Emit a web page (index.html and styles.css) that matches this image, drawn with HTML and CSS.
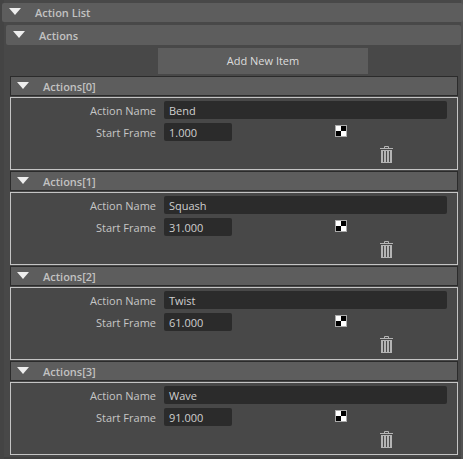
FILE: index.html
```html
<!DOCTYPE html>
<html>
<head>
<meta charset="utf-8">
<title>Action List</title>
<link rel="stylesheet" href="styles.css">
</head>
<body>

<div class="sectionhead toplevel"><span class="arrow"></span><span class="sectiontitle">Action List</span></div>
<div class="sectionhead secondlevel"><span class="arrow"></span><span class="sectiontitle">Actions</span></div>

<div class="addrow"><div class="addbutton">Add New Item</div></div>

<div class="itemlist">

  <div class="item">
    <div class="sectionhead itemhead"><span class="arrow"></span><span class="sectiontitle">Actions[0]</span></div>
    <div class="itembody">
      <div class="fieldrow"><span class="fieldlabel">Action Name</span><div class="textfield wide">Bend</div></div>
      <div class="fieldrow"><span class="fieldlabel">Start Frame</span><div class="textfield short">1.000</div><span class="keybox"><i></i><i></i></span></div>
      <div class="trashrow"><svg class="trash" width="13" height="17" viewBox="0 0 13 17"><path d="M4.5 2V0.5H8.5V2" fill="none" stroke="#b4b4b4"/><rect y="2" width="13" height="1" fill="#b4b4b4"/><rect x="1" y="4" width="11" height="13" fill="#b4b4b4"/><path d="M3.5 5V16M6.5 5V16M9.5 5V16" stroke="#4a4a4a"/></svg></div>
    </div>
  </div>

  <div class="item">
    <div class="sectionhead itemhead"><span class="arrow"></span><span class="sectiontitle">Actions[1]</span></div>
    <div class="itembody">
      <div class="fieldrow"><span class="fieldlabel">Action Name</span><div class="textfield wide">Squash</div></div>
      <div class="fieldrow"><span class="fieldlabel">Start Frame</span><div class="textfield short">31.000</div><span class="keybox"><i></i><i></i></span></div>
      <div class="trashrow"><svg class="trash" width="13" height="17" viewBox="0 0 13 17"><path d="M4.5 2V0.5H8.5V2" fill="none" stroke="#b4b4b4"/><rect y="2" width="13" height="1" fill="#b4b4b4"/><rect x="1" y="4" width="11" height="13" fill="#b4b4b4"/><path d="M3.5 5V16M6.5 5V16M9.5 5V16" stroke="#4a4a4a"/></svg></div>
    </div>
  </div>

  <div class="item">
    <div class="sectionhead itemhead"><span class="arrow"></span><span class="sectiontitle">Actions[2]</span></div>
    <div class="itembody">
      <div class="fieldrow"><span class="fieldlabel">Action Name</span><div class="textfield wide">Twist</div></div>
      <div class="fieldrow"><span class="fieldlabel">Start Frame</span><div class="textfield short">61.000</div><span class="keybox"><i></i><i></i></span></div>
      <div class="trashrow"><svg class="trash" width="13" height="17" viewBox="0 0 13 17"><path d="M4.5 2V0.5H8.5V2" fill="none" stroke="#b4b4b4"/><rect y="2" width="13" height="1" fill="#b4b4b4"/><rect x="1" y="4" width="11" height="13" fill="#b4b4b4"/><path d="M3.5 5V16M6.5 5V16M9.5 5V16" stroke="#4a4a4a"/></svg></div>
    </div>
  </div>

  <div class="item">
    <div class="sectionhead itemhead"><span class="arrow"></span><span class="sectiontitle">Actions[3]</span></div>
    <div class="itembody">
      <div class="fieldrow"><span class="fieldlabel">Action Name</span><div class="textfield wide">Wave</div></div>
      <div class="fieldrow"><span class="fieldlabel">Start Frame</span><div class="textfield short">91.000</div><span class="keybox"><i></i><i></i></span></div>
      <div class="trashrow"><svg class="trash" width="13" height="17" viewBox="0 0 13 17"><path d="M4.5 2V0.5H8.5V2" fill="none" stroke="#b4b4b4"/><rect y="2" width="13" height="1" fill="#b4b4b4"/><rect x="1" y="4" width="11" height="13" fill="#b4b4b4"/><path d="M3.5 5V16M6.5 5V16M9.5 5V16" stroke="#4a4a4a"/></svg></div>
    </div>
  </div>

</div>

</body>
</html>
```

FILE: styles.css
```css
html, body { margin: 0; padding: 0; }
body { width: 463px; height: 459px; overflow: hidden; background: #484848; box-shadow: inset 4px 0 #444, inset -2px 0 #525252, inset 0 -2px #404040; padding-top: 3px; box-sizing: border-box; font-family: "Open Sans", "Liberation Sans", sans-serif; font-size: 11px; color: #c8c8c8; }

.sectionhead { display: flex; align-items: center; height: 19px; background: #5d5d5d; border-radius: 2px; box-sizing: border-box; }
.arrow { width: 0; height: 0; border-left: 6px solid transparent; border-right: 6px solid transparent; border-top: 7px solid #eee; margin-top: -1px; margin-left: 7px; }
.sectiontitle { font-weight: 600; color: #c2c2c2; margin-left: 14px; }

.toplevel { margin-left: 2px; }
.toplevel .arrow { margin-top: -2px; }
.secondlevel { margin: 3px 2px 0 6px; height: 20px; }

.addrow { margin: 3px 0 0 158px; }
.addbutton { width: 210px; height: 26px; line-height: 26px; text-align: center; background: #5d5d5d; color: #dcdcdc; font-weight: 500; }

.itemlist { display: flex; flex-direction: column; gap: 1px; margin: 2px 5px 0 10px; }
.itemhead { height: 20px; border: 1px solid #2b2b2b; border-radius: 0; }
.itemhead .arrow { margin-left: 6px; }
.itembody { height: 73px; margin-top: 1px; box-sizing: border-box; border: 1px solid #c4c4c4; padding-top: 3px; display: flex; flex-direction: column; gap: 4px; }

.fieldrow { display: flex; align-items: center; height: 18px; }
.fieldlabel { width: 145px; text-align: right; margin-right: 8px; color: #c6c6c6; }
.textfield { height: 18px; line-height: 19px; background: #2b2b2b; border-radius: 2px; padding-left: 5px; box-sizing: border-box; color: #cfcfcf; }
.wide { width: 283px; }
.short { width: 68px; }

.keybox { display: grid; grid-template-columns: 5px 5px; grid-template-rows: 5px 5px; width: 10px; height: 10px; border: 1px solid #aaa; background: #fff; margin-left: 103px; margin-top: -2px; }
.keybox i { background: #000; }
.keybox i:first-child { grid-column: 2; grid-row: 1; }
.keybox i:last-child { grid-column: 1; grid-row: 2; }

.trashrow { display: flex; justify-content: flex-end; padding-right: 64px; margin-top: 1px; }
.trash { display: block; }
```
